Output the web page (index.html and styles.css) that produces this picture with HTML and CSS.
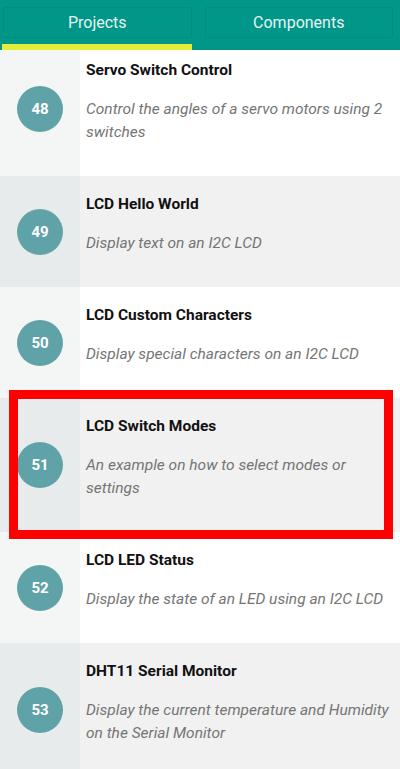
FILE: index.html
```html
<!DOCTYPE html>
<html lang="en">
<head>
  <meta charset="UTF-8">
  <meta name="viewport" content="width=device-width, initial-scale=1.0">
  <title>Projects</title>
  <link rel="stylesheet" href="styles.css">
</head>
<body>
  <div class="header">
    <div class="tab active"><span class="tab-box">Projects</span></div>
    <div class="tab"><span class="tab-box">Components</span></div>
  </div>

  <div class="list">
    <div class="list-inner">
      <div class="row">
        <div class="side"><div class="num">48</div></div>
        <div class="body">
          <div class="title">Servo Switch Control</div>
          <div class="desc">Control the angles of a servo motors using 2 switches</div>
        </div>
      </div>
      <div class="row alt">
        <div class="side"><div class="num">49</div></div>
        <div class="body">
          <div class="title">LCD Hello World</div>
          <div class="desc">Display text on an I2C LCD</div>
        </div>
      </div>
      <div class="row">
        <div class="side"><div class="num">50</div></div>
        <div class="body">
          <div class="title">LCD Custom Characters</div>
          <div class="desc">Display special characters on an I2C LCD</div>
        </div>
      </div>
      <div class="row alt marked">
        <div class="side"><div class="num">51</div></div>
        <div class="body">
          <div class="title">LCD Switch Modes</div>
          <div class="desc">An example on how to select modes or settings</div>
        </div>
      </div>
      <div class="row">
        <div class="side"><div class="num">52</div></div>
        <div class="body">
          <div class="title">LCD LED Status</div>
          <div class="desc">Display the state of an LED using an I2C LCD</div>
        </div>
      </div>
      <div class="row alt">
        <div class="side"><div class="num">53</div></div>
        <div class="body">
          <div class="title">DHT11 Serial Monitor</div>
          <div class="desc">Display the current temperature and Humidity on the Serial Monitor</div>
        </div>
      </div>
    </div>
  </div>
</body>
</html>
```

FILE: styles.css
```css
body {
  margin: 0;
  font-family: Roboto, "Noto Sans", Arial, sans-serif;
  background: #fff;
  height: 769px;
  overflow: hidden;
}
.header {
  position: relative;
  z-index: 2;
  display: flex;
  gap: 12px;
  height: 50px;
  padding: 0 7px 0 2px;
  background-color: #009688;
  box-sizing: border-box;
}
.tab {
  flex: 1;
  padding-top: 7px;
  border-bottom: 6px solid transparent;
}
.tab.active {
  border-bottom-color: #e4ee3a;
}
.tab-box {
  display: block;
  height: 29px;
  line-height: 29px;
  margin-left: 1px;
  text-align: center;
  font-size: 16px;
  color: #e6f4f2;
  border: 1px solid #008c80;
  border-radius: 2px;
}
.list {
  height: 719px;
  overflow: hidden;
}
.list-inner {
  margin-top: -8px;
}
.row {
  position: relative;
  display: flex;
  background-color: #fff;
}
.row.alt {
  background-color: #f1f1f1;
}
.side {
  width: 80px;
  flex-shrink: 0;
  display: flex;
  align-items: center;
  justify-content: center;
  background-color: #f4f5f5;
}
.row.alt .side {
  background-color: #e8ebec;
}
.num {
  width: 46px;
  height: 46px;
  border-radius: 50%;
  background-color: #5fa3a8;
  color: #fff;
  font-weight: bold;
  font-size: 15px;
  line-height: 46px;
  text-align: center;
}
.body {
  flex: 1;
  padding: 18px 3px 32px 6px;
}
.title {
  font-size: 15.5px;
  font-weight: bold;
  line-height: 20px;
  color: #111;
}
.desc {
  margin-top: 18px;
  font-size: 15.5px;
  font-style: italic;
  line-height: 23px;
  color: #757575;
}
.marked {
  z-index: 1;
}
.marked::after {
  content: "";
  position: absolute;
  top: -8px;
  bottom: -7px;
  left: 9px;
  right: 7px;
  border: 9px solid #ff0000;
  pointer-events: none;
}
```
